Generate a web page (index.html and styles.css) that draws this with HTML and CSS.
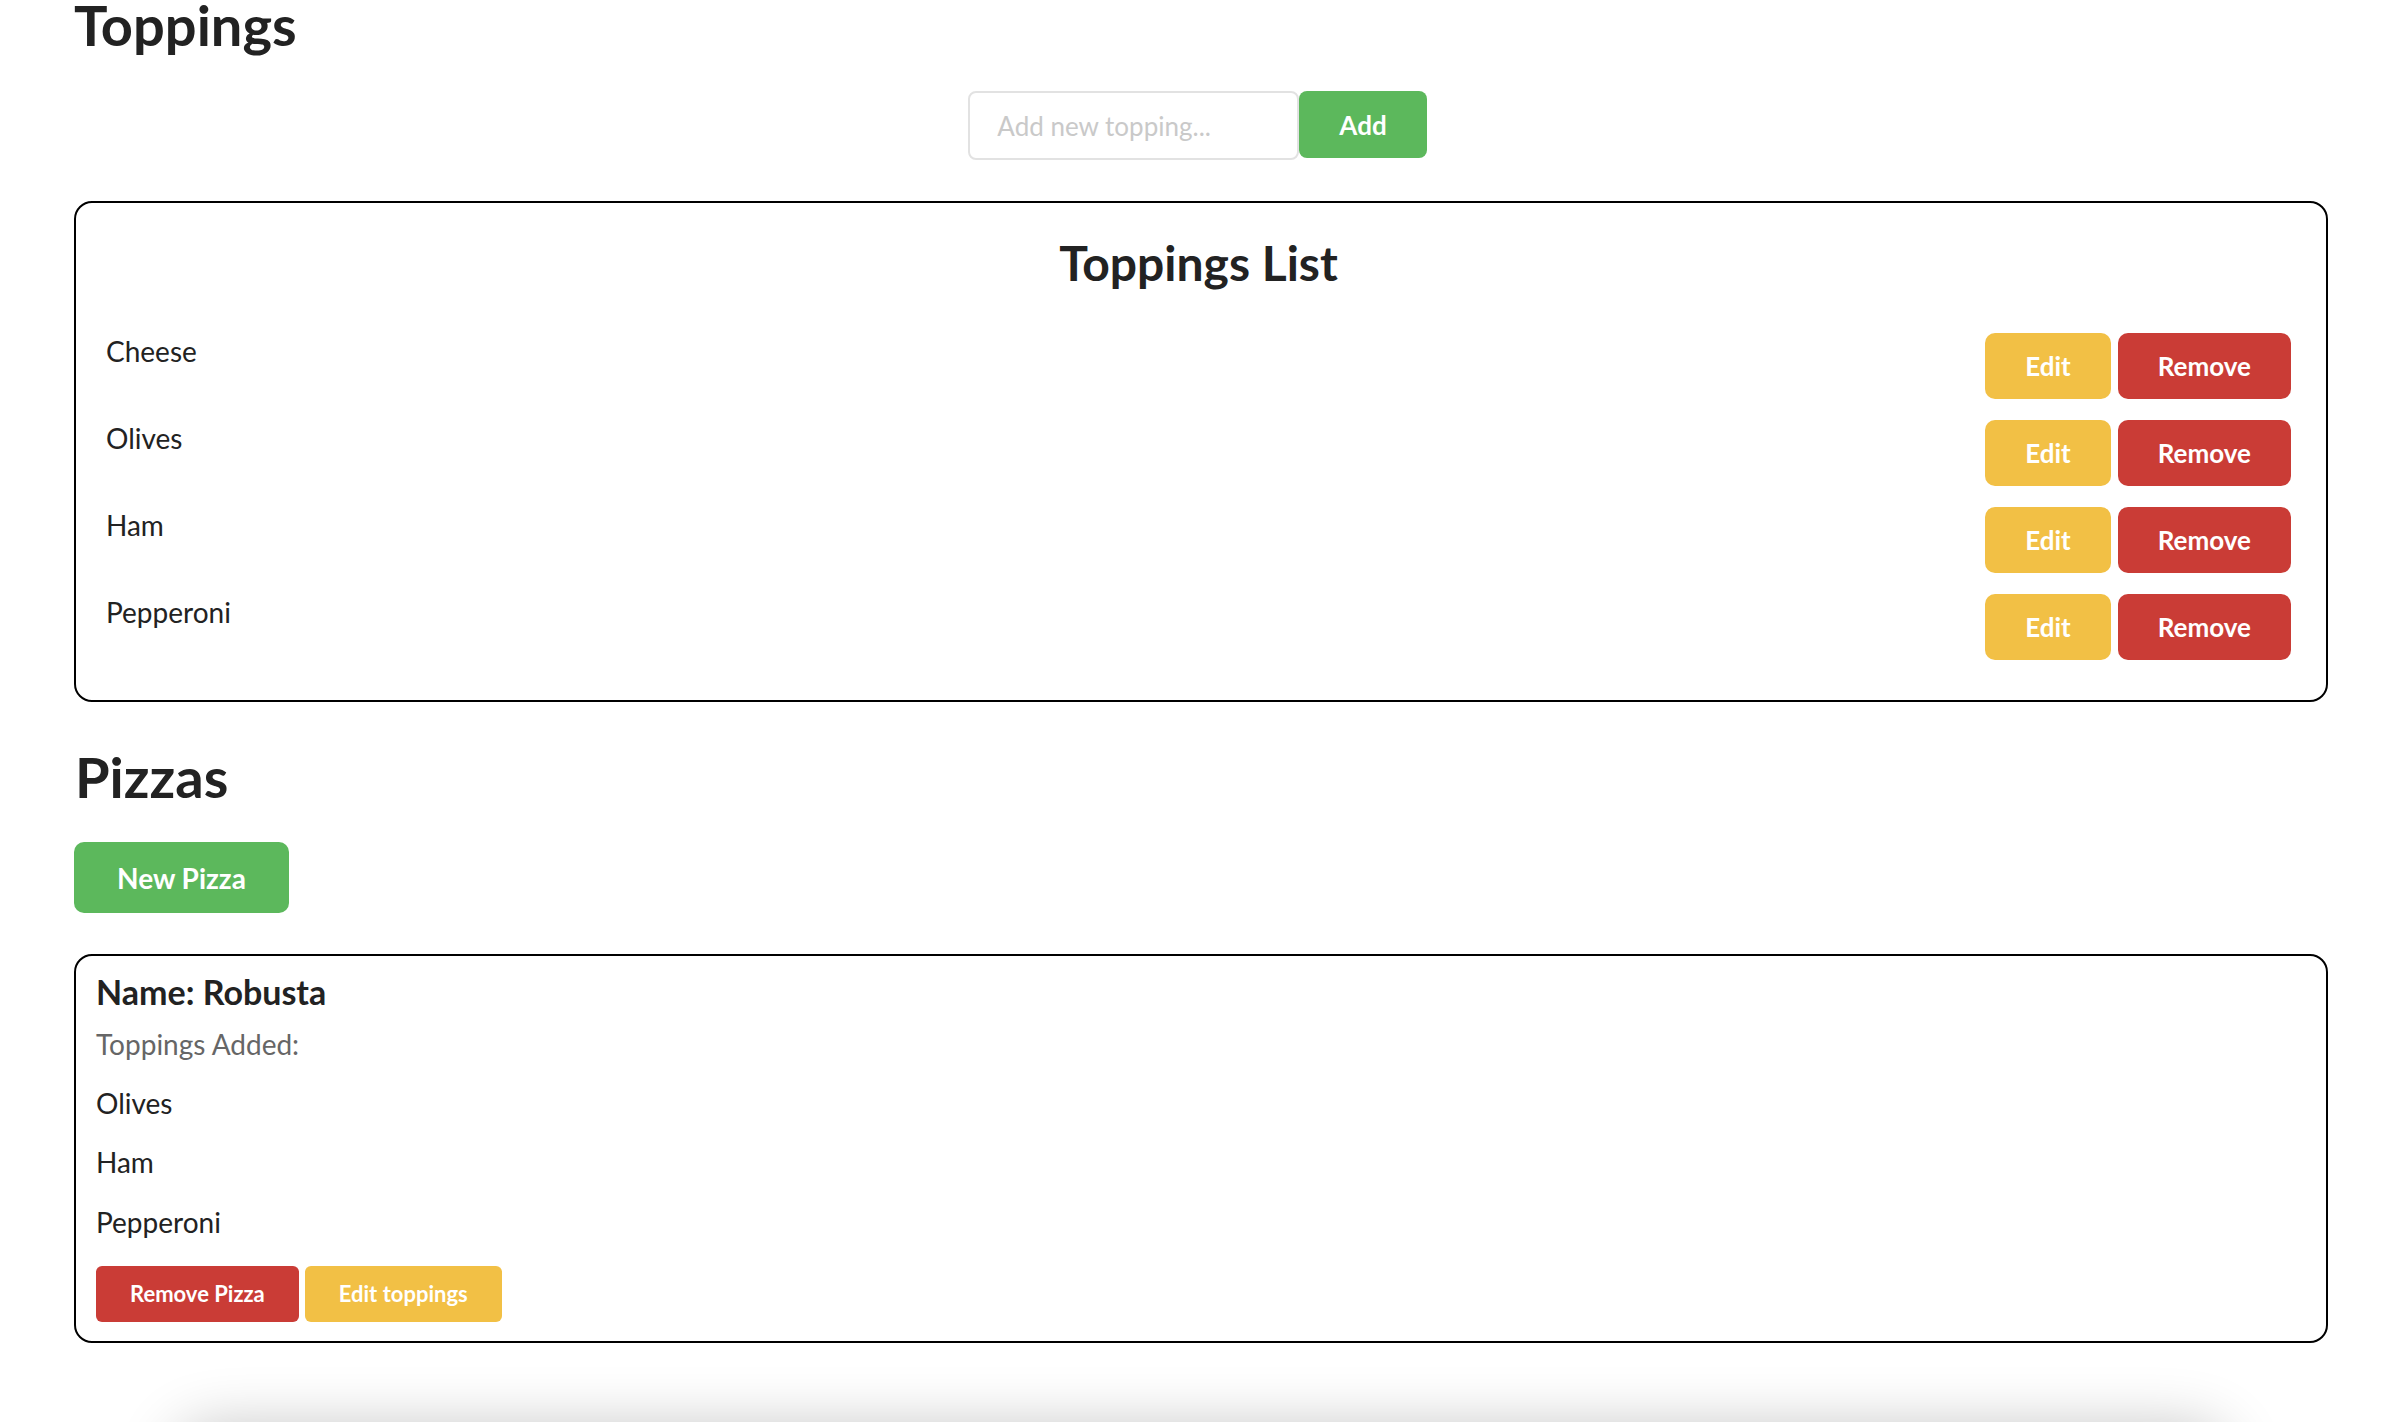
FILE: index.html
```html
<!DOCTYPE html>
<html lang="en">
<head>
<meta charset="utf-8">
<title>Pizza Manager</title>
<link rel="stylesheet" href="styles.css">
</head>
<body>
<main class="page">
  <h1 class="page-title">Toppings</h1>
  <form class="add-form">
    <input class="add-input" type="text" placeholder="Add new topping...">
    <button type="button" class="btn btn-green btn-add">Add</button>
  </form>

  <section class="card toppings-card">
    <h2 class="card-title">Toppings List</h2>
    <ul class="topping-list">
      <li class="topping-row"><span class="topping-name">Cheese</span><div class="row-actions"><button class="btn btn-yellow btn-row">Edit</button><button class="btn btn-red btn-row">Remove</button></div></li>
      <li class="topping-row"><span class="topping-name">Olives</span><div class="row-actions"><button class="btn btn-yellow btn-row">Edit</button><button class="btn btn-red btn-row">Remove</button></div></li>
      <li class="topping-row"><span class="topping-name">Ham</span><div class="row-actions"><button class="btn btn-yellow btn-row">Edit</button><button class="btn btn-red btn-row">Remove</button></div></li>
      <li class="topping-row"><span class="topping-name">Pepperoni</span><div class="row-actions"><button class="btn btn-yellow btn-row">Edit</button><button class="btn btn-red btn-row">Remove</button></div></li>
    </ul>
  </section>

  <h1 class="page-title pizzas-title">Pizzas</h1>
  <button class="btn btn-green btn-new">New Pizza</button>

  <section class="card pizza-card">
    <h3 class="pizza-name">Name: Robusta</h3>
    <p class="pizza-label">Toppings Added:</p>
    <p class="pizza-topping">Olives</p>
    <p class="pizza-topping">Ham</p>
    <p class="pizza-topping">Pepperoni</p>
    <div class="pizza-actions">
      <button class="btn btn-red btn-small">Remove Pizza</button>
      <button class="btn btn-yellow btn-small">Edit toppings</button>
    </div>
  </section>

  <div class="next-card"></div>
</main>
</body>
</html>
```

FILE: styles.css
```css
* { box-sizing: border-box; }

html, body {
  margin: 0;
  padding: 0;
  background: #ffffff;
}

body {
  font-family: "Lato", "Open Sans", "Liberation Sans", sans-serif;
  color: #222222;
  overflow: hidden;
}

.page {
  padding: 0 58px 0 74px;
}

.page-title {
  font-size: 56px;
  font-weight: 700;
  line-height: 0.9;
  margin: 0;
  color: #222222;
}

.pizzas-title {
  margin-top: 50px;
  padding-left: 1px;
}

.add-form {
  display: flex;
  justify-content: center;
  align-items: flex-start;
  margin: 41px 0 0 0;
  padding-right: 7px;
}

.add-input {
  width: 331px;
  height: 69px;
  border: 2px solid #e2e2e2;
  border-radius: 8px;
  padding: 0 0 0 27px;
  font-family: inherit;
  font-size: 26px;
  color: #222;
  outline: none;
}

.add-input::placeholder {
  color: #c9c9c9;
}

.btn {
  border: none;
  font-family: inherit;
  font-weight: 700;
  color: #ffffff;
  cursor: pointer;
  display: inline-flex;
  align-items: center;
  justify-content: center;
  white-space: nowrap;
}

.btn-green { background: #5cb85c; }
.btn-yellow { background: #f2c045; }
.btn-red { background: #ca3c36; }

.btn-add {
  height: 67px;
  padding: 0 40px;
  font-size: 26px;
  border-radius: 8px;
}

.card {
  border: 2px solid #000000;
  border-radius: 18px;
}

.toppings-card {
  margin-top: 41px;
  padding: 31px 35px 40px 30px;
}

.card-title {
  margin: 0;
  text-align: center;
  font-size: 48px;
  font-weight: 700;
  line-height: 1.2;
  color: #222222;
}

.topping-list {
  list-style: none;
  margin: 41px 0 0 0;
  padding: 0;
  display: flex;
  flex-direction: column;
  gap: 21px;
}

.topping-row {
  display: flex;
  justify-content: space-between;
  align-items: flex-start;
}

.topping-name {
  font-size: 28px;
  line-height: 1.2;
  margin-top: 2px;
}

.row-actions {
  display: flex;
  gap: 7px;
}

.btn-row {
  height: 66px;
  padding: 0 40px;
  font-size: 26px;
  border-radius: 10px;
}

.btn-new {
  margin-top: 40px;
  height: 71px;
  padding: 0 43px;
  font-size: 28px;
  border-radius: 10px;
}

.pizza-card {
  margin-top: 41px;
  padding: 16px 20px 19px 20px;
}

.pizza-name {
  margin: 0;
  font-size: 34px;
  font-weight: 700;
  line-height: 1.2;
}

.pizza-label {
  margin: 15px 0 0 0;
  font-size: 28px;
  line-height: 1.2;
  color: #666666;
}

.pizza-topping {
  margin: 25px 0 0 0;
  font-size: 28px;
  line-height: 1.2;
}

.pizza-topping + .pizza-topping {
  margin-top: 26px;
}

.pizza-actions {
  display: flex;
  gap: 6px;
  margin-top: 26px;
}

.btn-small {
  height: 56px;
  padding: 0 34px;
  font-size: 22px;
  border-radius: 6px;
}

.next-card {
  margin: 84px 100px 0 100px;
  height: 300px;
  background: #ffffff;
  border-radius: 40px;
  box-shadow: 0 0 60px 0 rgba(0, 0, 0, 0.24);
}
```
